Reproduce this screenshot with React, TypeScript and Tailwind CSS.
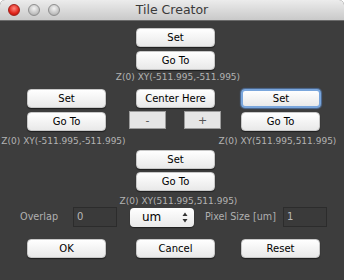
import React from "react";

const font = "font-['DejaVu_Sans',sans-serif]";

function Btn({
  label,
  focus = false,
  className = "",
}: {
  label: string;
  focus?: boolean;
  className?: string;
}) {
  return (
    <button
      className={`block h-[19px] shrink-0 rounded-[4px] bg-linear-to-b from-white to-[#e9e9e9] text-[10px] leading-none text-black ${
        focus
          ? "w-[80px] border-2 border-[#7aa6dc] shadow-[0_0_1px_1px_rgba(90,140,210,0.6)]"
          : "w-[79px] border border-[#c8c8c8] shadow-[0_1px_1px_rgba(0,0,0,0.5)]"
      } ${className}`}
    >
      {label}
    </button>
  );
}

function Square({ label, className = "" }: { label: string; className?: string }) {
  return (
    <button
      className={`block w-[37px] h-[18px] shrink-0 -mt-px border border-[#9d9d9d] bg-[#e6e6e6] text-[11px] leading-none text-[#555] ${className}`}
    >
      {label}
    </button>
  );
}

function Coord({ text, className = "" }: { text: string; className?: string }) {
  return (
    <div className={`h-[10px] text-[9px] leading-[10px] whitespace-nowrap text-center text-[#b3b3b3] ${className}`}>
      {text}
    </div>
  );
}

export default function App() {
  return (
    <div className={`w-[344px] h-[280px] bg-white ${font}`}>
      <div className="w-[344px] h-[280px] rounded-t-[5px] overflow-hidden flex flex-col bg-[#3d3d3d]">
        {/* title bar */}
        <div className="h-[21px] shrink-0 relative flex items-center bg-linear-to-b from-[#ececec] to-[#c9c9c9] border-b border-[#6a6a6a]">
          <div className="flex gap-[8px] pl-[8px]">
            <span className="w-[12px] h-[12px] rounded-full bg-[radial-gradient(circle_at_50%_35%,#ff8a80,#e0241b_60%,#a5100a)] border border-[#a0201a]" />
            <span className="w-[12px] h-[12px] rounded-full bg-[radial-gradient(circle_at_50%_35%,#f4f4f4,#c4c4c4_60%,#9e9e9e)] border border-[#8e8e8e]" />
            <span className="w-[12px] h-[12px] rounded-full bg-[radial-gradient(circle_at_50%_35%,#f4f4f4,#c4c4c4_60%,#9e9e9e)] border border-[#8e8e8e]" />
          </div>
          <div className="absolute inset-0 flex items-center justify-center text-[12.5px] text-[#3a3a3a]">
            Tile Creator
          </div>
        </div>

        {/* top */}
        <div className="flex pl-[136px] mt-[7px]">
          <Btn label="Set" />
        </div>
        <div className="flex pl-[136px] mt-[4px]">
          <Btn label="Go To" />
        </div>
        <div className="flex mt-[2px]">
          <Coord text="Z(0) XY(-511.995,-511.995)" className="ml-[58px] w-[240px]" />
        </div>

        {/* middle */}
        <div className="flex items-start pl-[27px] mt-[7px]">
          <Btn label="Set" />
          <Btn label="Center Here" className="ml-[30px]" />
          <Btn label="Set" focus className="ml-[26px]" />
        </div>
        <div className="flex items-start pl-[27px] mt-[4px]">
          <Btn label="Go To" />
          <Square label="-" className="ml-[23px]" />
          <Square label="+" className="ml-[18px]" />
          <Btn label="Go To" className="ml-[20px]" />
        </div>
        <div className="flex mt-[5px]">
          <Coord text="Z(0) XY(-511.995,-511.995)" className="w-[127px]" />
          <Coord text="Z(0) XY(511.995,511.995)" className="w-[125px] ml-[88px]" />
        </div>

        {/* bottom */}
        <div className="flex pl-[136px] mt-[4px]">
          <Btn label="Set" />
        </div>
        <div className="flex pl-[136px] mt-[3px]">
          <Btn label="Go To" />
        </div>
        <div className="flex mt-[5px]">
          <Coord text="Z(0) XY(511.995,511.995)" className="ml-[58px] w-[241px]" />
        </div>

        {/* settings */}
        <div className="flex items-center mt-[1px] h-[20px]">
          <span className="ml-[20px] w-[53px] text-[9.7px] text-[#b0b0b0]">Overlap</span>
          <div className="w-[44px] h-[20px] border border-[#2c2c2c] bg-[#3a3a3a] text-[10px] leading-[18px] pl-[3px] text-[#b8b8b8]">
            0
          </div>
          <div className="ml-[13px] w-[64px] h-[19px] rounded-[4px] bg-linear-to-b from-white to-[#e9e9e9] shadow-[0_1px_1px_rgba(0,0,0,0.5)] flex items-center pl-[12px] pr-[6px]">
            <span className="text-[12px] text-black leading-none">um</span>
            <svg className="ml-auto" width="6" height="11" viewBox="0 0 6 11">
              <path d="M3 0.5 L5.5 4 L0.5 4 Z" fill="#333" />
              <path d="M3 10.5 L5.5 7 L0.5 7 Z" fill="#333" />
            </svg>
          </div>
          <span className="ml-[11px] text-[9.6px] text-[#b0b0b0] whitespace-nowrap">Pixel Size [um]</span>
          <div className="ml-auto mr-[17px] w-[44px] h-[20px] border border-[#2c2c2c] bg-[#3a3a3a] text-[10px] leading-[18px] pl-[3px] text-[#b8b8b8]">
            1
          </div>
        </div>

        <div className="flex items-start pl-[27px] mt-[12px]">
          <Btn label="OK" />
          <Btn label="Cancel" className="ml-[30px]" />
          <Btn label="Reset" className="ml-[26px]" />
        </div>
      </div>
    </div>
  );
}
